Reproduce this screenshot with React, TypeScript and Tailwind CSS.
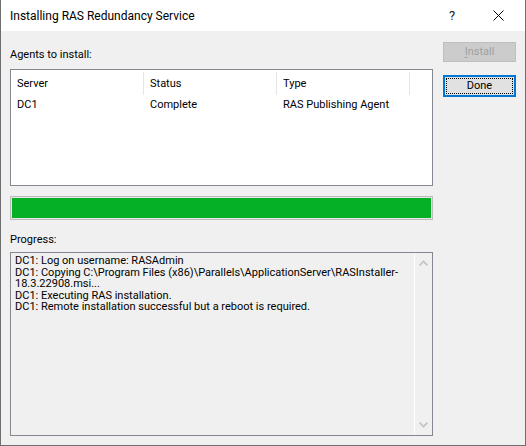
import React from "react";

const font = { fontFamily: 'Roboto, "Noto Sans", sans-serif' };

function Chevron({ up }: { up?: boolean }) {
  return (
    <svg width="9" height="6" viewBox="0 0 9 6" className="block">
      <path
        d={up ? "M0.5 5.5 L4.5 1.5 L8.5 5.5" : "M0.5 0.5 L4.5 4.5 L8.5 0.5"}
        fill="none"
        stroke="#c2c2c2"
        strokeWidth="1.6"
      />
    </svg>
  );
}

export default function App() {
  const logLines = [
    "DC1: Log on username: RASAdmin",
    "DC1: Copying C:\\Program Files (x86)\\Parallels\\ApplicationServer\\RASInstaller-",
    "18.3.22908.msi...",
    "DC1: Executing RAS installation.",
    "DC1: Remote installation successful but a reboot is required.",
  ];
  return (
    <div
      className="w-[526px] h-[446px] flex flex-col bg-[#f0f0f0] border-x border-b border-[#6f6f6f] text-[11px] text-black overflow-hidden"
      style={font}
    >
      {/* Title bar */}
      <div className="h-[31px] shrink-0 bg-white flex items-center">
        <span className="ml-[9px] text-[12px] leading-[16px]">Installing RAS Redundancy Service</span>
        <div className="ml-auto mr-[4px] flex items-center">
          <span className="w-[46px] text-center text-[13px] leading-[16px] text-[#222]">?</span>
          <span className="w-[46px] h-[31px] flex items-center justify-center">
            <svg width="11" height="11" viewBox="0 0 11 11">
              <path d="M0.5 0.5 L10.5 10.5 M10.5 0.5 L0.5 10.5" stroke="#000" strokeWidth="1" />
            </svg>
          </span>
        </div>
      </div>

      {/* Body */}
      <div className="flex flex-1">
        {/* Left column */}
        <div className="ml-[9px] w-[423px] flex flex-col">
          <div className="mt-[16px] h-[16px] leading-[16px]">Agents to install:</div>
          <div className="mt-[6px] h-[117px] bg-white border border-[#828790]">
            <div className="flex h-[27px] items-stretch">
              {["Server", "Status", "Type"].map((h) => (
                <div key={h} className="w-[133px] flex items-center pl-[6px] pt-[1px] border-r border-[#e5e5e5] my-[2px]">
                  {h}
                </div>
              ))}
            </div>
            <div className="flex h-[17px] items-center">
              <div className="w-[133px] pl-[6px]">DC1</div>
              <div className="w-[133px] pl-[6px]">Complete</div>
              <div className="w-[133px] pl-[6px]">RAS Publishing Agent</div>
            </div>
          </div>
          <div className="mt-[10px] h-[24px] border border-[#bcbcbc] bg-[#e6e6e6] p-px">
            <div className="h-full w-full bg-[#06b025]" />
          </div>
          <div className="mt-[12px] h-[16px] leading-[16px]">Progress:</div>
          <div className="mt-[4px] h-[184px] border border-[#828790] bg-[#f0f0f0] flex">
            <div className="flex-1 pl-[4px] pt-[2px]">
              {logLines.map((l, i) => (
                <div key={i} className="h-[11.5px] leading-[11.5px] whitespace-nowrap">
                  {l}
                </div>
              ))}
            </div>
            <div className="w-[18px] border-l border-white flex flex-col items-center justify-between py-[7px]">
              <Chevron up />
              <Chevron />
            </div>
          </div>
        </div>

        {/* Right column */}
        <div className="ml-[10px] w-[73px] flex flex-col">
          <div className="mt-[11px] h-[20px] bg-[#cccccc] border border-[#bfbfbf] text-[#a0a0a0] flex items-center justify-center">
            <span>
              <span className="underline underline-offset-2">I</span>nstall
            </span>
          </div>
          <div className="mt-[13px] h-[22px] bg-[#e1e1e1] border-2 border-[#0078d7] p-px">
            <div className="h-full border border-dotted border-black flex items-center justify-center">
              Done
            </div>
          </div>
        </div>
      </div>
    </div>
  );
}
